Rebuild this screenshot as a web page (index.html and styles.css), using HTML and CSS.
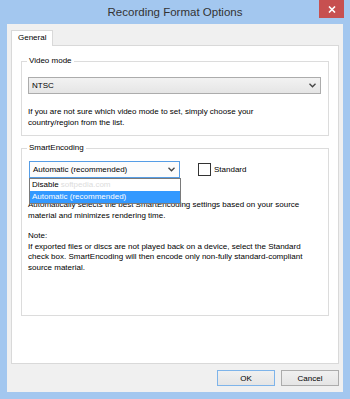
FILE: index.html
```html
<!DOCTYPE html>
<html>
<head>
    <title>Recording Format Options</title>
    <link rel="stylesheet" href="styles.css">
</head>
<body>
    <div class="window">
        <div class="titlebar">
            <span></span>
            <span class="title">Recording Format Options</span>
            <span class="close">
                <svg width="8" height="7" viewBox="0 0 8 7"><path d="M1 0.5 L7 6.5 M7 0.5 L1 6.5" stroke="#fff" stroke-width="1.6"/></svg>
            </span>
        </div>

        <div class="client">
            <div class="tabs">
                <div class="tab">General</div>
            </div>

            <div class="panel">
                <fieldset class="group">
                    <legend>Video mode</legend>
                    <div class="select">
                        <span>NTSC</span>
                        <svg class="chevron" width="7" height="5" viewBox="0 0 7 5"><path d="M0.5 0.8 L3.5 3.8 L6.5 0.8" fill="none" stroke="#444" stroke-width="1.3"/></svg>
                    </div>
                    <p class="hint">If you are not sure which video mode to set, simply choose your<br>country/region from the list.</p>
                </fieldset>

                <fieldset class="group group-smart">
                    <legend>SmartEncoding</legend>
                    <div class="smart-row">
                        <div class="combo-wrap">
                            <div class="combo">
                                <span>Automatic (recommended)</span>
                                <svg class="chevron" width="7" height="5" viewBox="0 0 7 5"><path d="M0.5 0.8 L3.5 3.8 L6.5 0.8" fill="none" stroke="#444" stroke-width="1.3"/></svg>
                            </div>
                            <ul class="dropdown">
                                <li>Disable<span class="wm">softpedia.com</span></li>
                                <li class="selected">Automatic (recommended)</li>
                            </ul>
                        </div>
                        <label class="check"><span class="box"></span>Standard</label>
                    </div>
                    <p class="desc">Automatically selects the best SmartEncoding settings based on your source<br>material and minimizes rendering time.</p>
                    <p class="note">Note:<br>If exported files or discs are not played back on a device, select the Standard<br>check box. SmartEncoding will then encode only non-fully standard-compliant<br>source material.</p>
                </fieldset>
            </div>

            <div class="buttons">
                <button class="btn btn-default">OK</button>
                <button class="btn">Cancel</button>
            </div>
        </div>
    </div>
</body>
</html>
```

FILE: styles.css
```css
body {
    margin: 0;
    font-family: "Liberation Sans", Arial, sans-serif;
    font-size: 8px;
    color: #000;
}
.window {
    width: 350px;
    height: 399px;
    background-color: #a3c7ef;
    display: flex;
    flex-direction: column;
}
.titlebar {
    height: 24px;
    display: grid;
    grid-template-columns: 1fr auto 1fr;
    align-items: start;
    padding: 0 6px;
}
.title {
    font-size: 11.5px;
    line-height: 24px;
    color: #333;
}
.close {
    justify-self: end;
    width: 25px;
    height: 18px;
    background-color: #c75050;
    display: flex;
    align-items: center;
    justify-content: center;
}
.client {
    flex: 1;
    margin: 0 7px 7px;
    background-color: #f0f0f0;
    display: flex;
    flex-direction: column;
    padding: 6px 4px;
}
.tabs {
    display: flex;
}
.tab {
    height: 16px;
    box-sizing: border-box;
    margin-bottom: -1px;
    padding: 0 6px;
    line-height: 14px;
    background-color: #fff;
    border: 1px solid #d9d9d9;
    border-bottom: none;
    position: relative;
    z-index: 1;
}
.panel {
    flex: 1;
    background-color: #fff;
    border: 1px solid #d9d9d9;
    padding: 10px 9px 0;
}
.group {
    margin: 0;
    border: 1px solid #dcdcdc;
    padding: 0 7px 7px 6px;
}
.group legend {
    padding: 0 2px;
    margin-left: -1px;
    line-height: 10px;
}
.group-smart {
    margin-top: 7px;
    padding-bottom: 42px;
}
.select, .combo {
    height: 17px;
    box-sizing: border-box;
    display: flex;
    align-items: center;
    justify-content: space-between;
    padding: 0 4px 0 3px;
}
.select {
    margin-top: 11px;
    border: 1px solid #acacac;
    background: linear-gradient(#f2f2f2, #e5e5e5);
}
.combo {
    border: 1px solid #569de5;
    background-color: #fcfcfc;
}
.hint, .desc, .note {
    margin: 0;
    line-height: 10.5px;
}
.hint {
    margin-top: 13px;
}
.smart-row {
    display: flex;
    align-items: center;
    margin-top: 8px;
}
.combo-wrap {
    position: relative;
    width: 151px;
    margin-left: 1px;
}
.dropdown {
    position: absolute;
    top: 100%;
    left: 0;
    right: -1px;
    margin: 0;
    padding: 0;
    list-style: none;
    background-color: #fff;
    border: 1px solid #7a7a7a;
    z-index: 2;
}
.dropdown li {
    height: 12px;
    line-height: 12px;
    padding: 0 2px;
}
.dropdown li.selected {
    background-color: #3399ff;
    color: #fff;
}
.wm {
    color: #dcdcdc;
    margin-left: 2px;
}
.check {
    margin-left: 18px;
    display: flex;
    align-items: center;
    gap: 3px;
}
.box {
    width: 11px;
    height: 11px;
    border: 1px solid #333;
    background-color: #fff;
}
.desc {
    margin-top: 22px;
}
.note {
    margin-top: 10px;
}
.buttons {
    display: flex;
    justify-content: flex-end;
    gap: 6px;
    margin-top: 6px;
}
.btn {
    width: 58px;
    height: 16px;
    padding: 0;
    font-family: inherit;
    font-size: 8px;
    color: #000;
    border: 1px solid #acacac;
    background: linear-gradient(#f0f0f0, #e5e5e5);
}
.btn-default {
    border-color: #7eb4ea;
}
```
